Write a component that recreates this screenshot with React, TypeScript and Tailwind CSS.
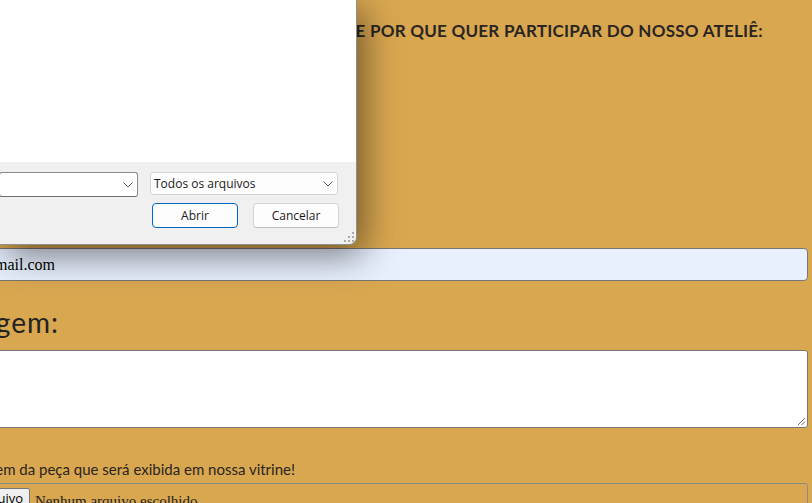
import React from "react";

const Chevron = ({ className = "" }: { className?: string }) => (
  <svg width="10" height="6" viewBox="0 0 10 6" className={className}>
    <path d="M0.5 0.5 L5 5 L9.5 0.5" fill="none" stroke="#5c5c5c" strokeWidth="1" />
  </svg>
);

const Grip = () => (
  <svg width="10" height="10" viewBox="0 0 10 10">
    <rect x="8" y="0" width="2" height="2" fill="#a9a9a9" />
    <rect x="4" y="4" width="2" height="2" fill="#a9a9a9" />
    <rect x="8" y="4" width="2" height="2" fill="#a9a9a9" />
    <rect x="0" y="8" width="2" height="2" fill="#a9a9a9" />
    <rect x="4" y="8" width="2" height="2" fill="#a9a9a9" />
    <rect x="8" y="8" width="2" height="2" fill="#a9a9a9" />
  </svg>
);

const TextareaGrip = () => (
  <svg width="9" height="9" viewBox="0 0 9 9">
    <path d="M1 8 L8 1 M4.5 8 L8 4.5" stroke="#6b6b6b" strokeWidth="1" />
  </svg>
);

export default function App() {
  const sans = { fontFamily: "Lato, 'Noto Sans', sans-serif" };
  const serif = { fontFamily: "'Liberation Serif', 'Times New Roman', serif" };
  const ui = { fontFamily: "'Open Sans', 'Noto Sans', sans-serif" };
  return (
    <div className="relative w-[812px] h-[503px] overflow-hidden bg-[#d9a750] text-[#272422]">
      {/* page */}
      <div className="flex flex-col w-[808px]" style={sans}>
        <div className="mt-[21px] w-[763px] flex justify-end whitespace-nowrap">
          <h2 className="text-[17px] leading-[20px] font-bold tracking-[0.25px] text-[#2a2522]">
            CONTE-NOS BREVEMENTE POR QUE QUER PARTICIPAR DO NOSSO ATELIÊ:
          </h2>
        </div>

        <div className="mt-[207px] h-[33px] w-[812px] -ml-[4px] pl-[4px] flex items-center rounded-[4px] border border-[#767676] bg-[#e8f0fe]">
          <div className="w-[54px] flex justify-end whitespace-nowrap">
            <span className="text-[16px] text-black" style={serif}>
              contato@email.com
            </span>
          </div>
        </div>

        <div className="mt-[24px] w-[59px] flex justify-end whitespace-nowrap">
          <label className="text-[28px] leading-[34px] tracking-[1px] text-[#222]">Mensagem:</label>
        </div>

        <div className="mt-[11px] h-[78px] w-[812px] -ml-[4px] relative rounded-[3px] border border-[#767676] bg-white">
          <div className="absolute right-[1px] bottom-[1px]">
            <TextareaGrip />
          </div>
        </div>

        <div className="mt-[32px] w-[295px] flex justify-end whitespace-nowrap">
          <span className="text-[15px] leading-[18px] text-[#2a2522]">
            Escolha a imagem da peça que será exibida em nossa vitrine!
          </span>
        </div>

        <div className="mt-[5px] h-[40px] w-[812px] -ml-[4px] rounded-[3px] border border-[#8a8a8a] flex items-start pt-[4px]">
          <div className="w-[33px] flex justify-end whitespace-nowrap">
            <span
              className="h-[22px] px-[6px] flex items-center text-[13px] rounded-[2px] border border-[#767676] bg-[#efefef] text-black"
              style={ui}
            >
              Escolher arquivo
            </span>
          </div>
          <span className="ml-[5px] mt-[2px] text-[15px] text-[#222] whitespace-nowrap" style={serif}>
            Nenhum arquivo escolhido
          </span>
        </div>
      </div>

      {/* file dialog overlay */}
      <div
        className="absolute left-0 top-0 w-[357px] h-[245px] flex flex-col rounded-br-[8px] border-r border-b border-[#8f8f8f] overflow-hidden shadow-[6px_10px_36px_rgba(0,0,0,0.5)]"
        style={ui}
      >
        <div className="flex-1 bg-white" />
        <div className="h-[82px] bg-[#f0f0f0] relative">
          <div className="flex items-start mt-[10px]">
            <div className="w-[139px] h-[25px] -ml-px bg-white border border-[#8b8b8b] border-b-[#6e6e6e] rounded-[3px] flex items-center justify-end pr-[4px]">
              <Chevron />
            </div>
            <div className="ml-[12px] w-[188px] h-[23px] bg-[#fdfdfd] border border-[#d4d4d4] rounded-[3px] flex items-center justify-between pl-[3px] pr-[4px]">
              <span className="text-[12px] text-[#1a1a1a]">Todos os arquivos</span>
              <Chevron />
            </div>
          </div>
          <div className="flex mt-[6px] ml-[152px] gap-[15px]">
            <div className="w-[86px] h-[25px] rounded-[4px] border border-[#0067c0] bg-[#fdfdfd] flex items-center justify-center text-[12px] text-[#1a1a1a]">
              Abrir
            </div>
            <div className="w-[86px] h-[25px] rounded-[4px] border border-[#d4d4d4] border-b-[#bcbcbc] bg-[#fdfdfd] flex items-center justify-center text-[12px] text-[#1a1a1a]">
              Cancelar
            </div>
          </div>
          <div className="absolute right-[2px] bottom-[2px]">
            <Grip />
          </div>
        </div>
      </div>
    </div>
  );
}
